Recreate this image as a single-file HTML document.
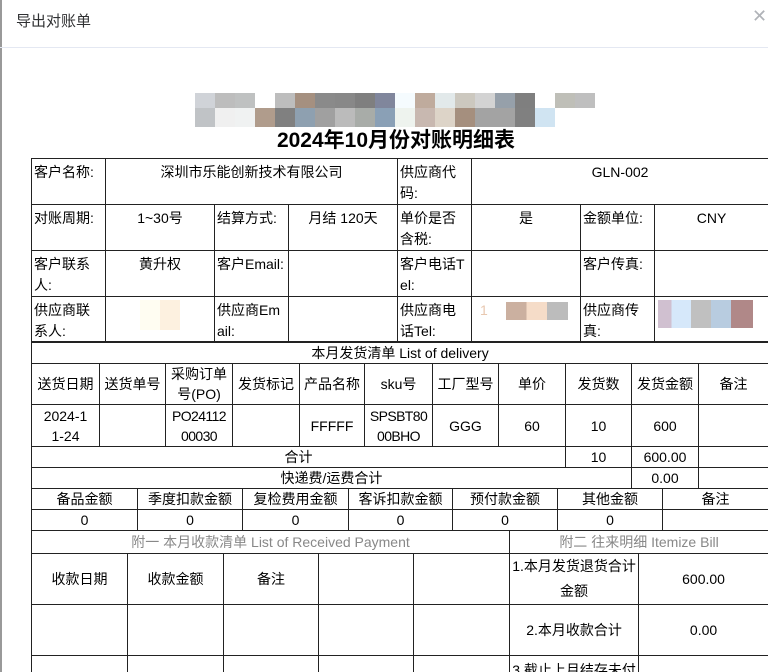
<!DOCTYPE html>
<html><head><meta charset="utf-8"><style>
*{margin:0;padding:0;box-sizing:border-box}
html,body{width:768px;height:672px;overflow:hidden}
body{background:#fff;font-family:"Liberation Sans","Noto Sans CJK SC",sans-serif;color:#000;position:relative}
.hdr{position:absolute;left:16px;top:10px;font-size:15px;color:#303133}
.x{position:absolute;left:752px;top:6px;font-size:18px;color:#b0b3b8}
.sep{position:absolute;left:0;top:47px;width:768px;height:1px;background:#e4e8f2}
.lb{position:absolute;left:0;top:0;width:2px;height:672px;background:#999}
.title{position:absolute;left:0;width:792px;top:124px;text-align:center;font-size:21px;font-weight:bold}
.pix{position:absolute;left:195px;display:flex}
.pix i{display:block;width:20px;height:100%}
table{position:absolute;left:31px;border-collapse:collapse;table-layout:fixed;font-size:14px}
td{border:1px solid #222;text-align:center;vertical-align:middle;line-height:20px;overflow:hidden;padding:0 1px;word-break:break-all}
.t1 td{vertical-align:top;padding-top:3px;line-height:21px}
.t1 td.l{text-align:left;padding-left:2px;padding-right:4px}
.g{color:#888}
</style></head><body>
<div class="lb"></div>
<div class="hdr">导出对账单</div>
<div class="x">✕</div>
<div class="sep"></div>
<div class="pix" style="top:93px;height:15px"><i style="background:#d0d3d8"></i><i style="background:#bdbdbd"></i><i style="background:#bfc1c1"></i><i></i><i style="background:#bdbdbd"></i><i style="background:#a59080"></i><i style="background:#8a8a8a"></i><i style="background:#888"></i><i style="background:#7f7f7f"></i><i style="background:#80869c"></i><i style="background:#f5fbfe"></i><i style="background:#bfab9d"></i><i style="background:#e2e9ea"></i><i style="background:#ccc8bf"></i><i style="background:#d3d3d3"></i><i style="background:#96a0aa"></i><i style="background:#7f7f7f"></i><i></i><i style="background:#bfbfb8"></i><i style="background:#bfbfbf"></i></div>
<div class="pix" style="top:108px;height:19px"><i style="background:#c0c3c6"></i><i style="background:#f0f0f0"></i><i style="background:#f0f2f2"></i><i style="background:#b09c8c"></i><i style="background:#808080"></i><i style="background:#8ea0b0"></i><i style="background:#a0a0a0"></i><i style="background:#bbb"></i><i style="background:#a8aca8"></i><i style="background:#8aa0b6"></i><i style="background:#eef3ee"></i><i style="background:#c8b8b0"></i><i style="background:#ddd4c8"></i><i style="background:#a58f7e"></i><i style="background:#a3a3a3"></i><i style="background:#a3a3a3"></i><i style="background:#808080"></i><i style="background:#d0e4f2"></i></div>
<div class="title">2024年10月份对账明细表</div>

<table class="t1" style="top:158px;width:737px">
<colgroup><col style="width:74px"><col style="width:109px"><col style="width:74px"><col style="width:109px"><col style="width:74px"><col style="width:109px"><col style="width:74px"><col style="width:114px"></colgroup>
<tr style="height:46px"><td class="l">客户名称:</td><td colspan="3">深圳市乐能创新技术有限公司</td><td class="l">供应商代码:</td><td colspan="3">GLN-002</td></tr>
<tr style="height:46px"><td class="l">对账周期:</td><td>1~30号</td><td class="l">结算方式:</td><td>月结 120天</td><td class="l">单价是否含税:</td><td>是</td><td class="l">金额单位:</td><td>CNY</td></tr>
<tr style="height:46px"><td class="l">客户联系人:</td><td>黄升权</td><td class="l">客户Email:</td><td></td><td class="l">客户电话Tel:</td><td></td><td class="l">客户传真:</td><td></td></tr>
<tr style="height:45px"><td class="l">供应商联系人:</td><td><div style="margin:0 auto;width:40px;height:30px;background:linear-gradient(90deg,#fffdf2 50%,#fdf1e0 50%)"></div></td><td class="l">供应商Email:</td><td></td><td class="l">供应商电话Tel:</td><td style="text-align:left;padding-left:8px;white-space:nowrap"><span style="color:#e8c8b0">1</span><span style="display:inline-block;vertical-align:middle;margin-left:18px;width:62px;height:18px;background:linear-gradient(90deg,#cbb0a0 33%,#f5dcc8 33% 66%,#bcbcbc 66%)"></span></td><td class="l">供应商传真:</td><td><div style="margin:0 0 0 2px;width:95px;height:28px;background:linear-gradient(90deg,#d0c0d0 14%,#d6e8fa 14% 35%,#c0c0c0 35% 56%,#b8cce0 56% 77%,#b08888 77%)"></div></td></tr>
</table>

<table style="top:341px;width:737px">
<colgroup><col style="width:68px"><col style="width:66px"><col style="width:67px"><col style="width:67px"><col style="width:65px"><col style="width:68px"><col style="width:66px"><col style="width:67px"><col style="width:66px"><col style="width:67px"><col style="width:70px"></colgroup>
<tr style="height:22px"><td colspan="11">本月发货清单 List of delivery</td></tr>
<tr style="height:41px"><td>送货日期</td><td>送货单号</td><td style="padding:0 4px">采购订单号(PO)</td><td>发货标记</td><td>产品名称</td><td>sku号</td><td>工厂型号</td><td>单价</td><td>发货数</td><td>发货金额</td><td>备注</td></tr>
<tr style="height:42px"><td>2024-1<br>1-24</td><td></td><td style="letter-spacing:-0.6px">PO24112<br>00030</td><td></td><td>FFFFF</td><td style="letter-spacing:-0.6px">SPSBT80<br>00BHO</td><td>GGG</td><td>60</td><td>10</td><td>600</td><td></td></tr>
<tr style="height:21px"><td colspan="8">合计</td><td>10</td><td>600.00</td><td></td></tr>
<tr style="height:21px"><td colspan="9">快递费/运费合计</td><td>0.00</td><td></td></tr>
</table>

<table style="top:488px;width:737px">
<colgroup><col style="width:106px"><col style="width:105px"><col style="width:106px"><col style="width:104px"><col style="width:105px"><col style="width:105px"><col style="width:106px"></colgroup>
<tr style="height:21px"><td>备品金额</td><td>季度扣款金额</td><td>复检费用金额</td><td>客诉扣款金额</td><td>预付款金额</td><td>其他金额</td><td>备注</td></tr>
<tr style="height:21px"><td>0</td><td>0</td><td>0</td><td>0</td><td>0</td><td>0</td><td></td></tr>
</table>

<table style="top:530px;width:737px">
<colgroup><col style="width:96px"><col style="width:96px"><col style="width:95px"><col style="width:95px"><col style="width:96px"><col style="width:129px"><col style="width:130px"></colgroup>
<tr style="height:23px"><td colspan="5" class="g">附一 本月收款清单 List of Received Payment</td><td colspan="2" class="g">附二 往来明细 Itemize Bill</td></tr>
<tr style="height:49px"><td>收款日期</td><td>收款金额</td><td>备注</td><td></td><td></td><td style="line-height:25px">1.本月发货退货合计金额</td><td>600.00</td></tr>
<tr style="height:51px"><td></td><td></td><td></td><td></td><td></td><td>2.本月收款合计</td><td>0.00</td></tr>
<tr style="height:51px"><td></td><td></td><td></td><td></td><td></td><td style="vertical-align:top;padding-top:4px">3.截止上月结存未付</td><td></td></tr>
</table>
</body></html>
